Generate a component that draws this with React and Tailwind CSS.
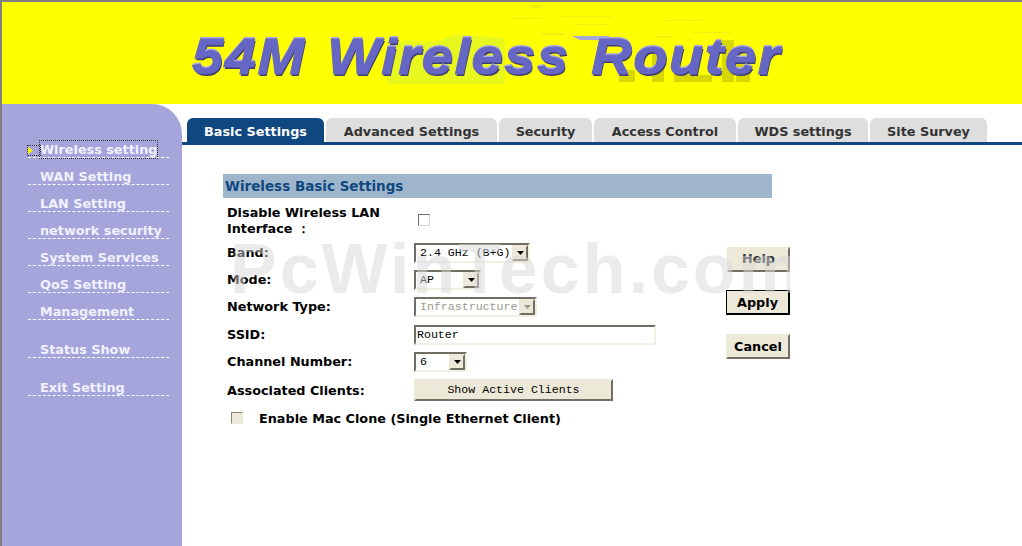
const menu = [
  { label: 'Wireless setting', active: true },
  { label: 'WAN Setting' },
  { label: 'LAN Setting' },
  { label: 'network security' },
  { label: 'System Services' },
  { label: 'QoS Setting' },
  { label: 'Management' },
  { label: 'Status Show', gap: true },
  { label: 'Exit Setting', gap: true },
];

const tabs = [
  { label: 'Basic Settings', width: 'w-[137px]', active: true },
  { label: 'Advanced Settings', width: 'w-[171px]' },
  { label: 'Security', width: 'w-[93px]' },
  { label: 'Access Control', width: 'w-[142px]' },
  { label: 'WDS settings', width: 'w-[130px]' },
  { label: 'Site Survey', width: 'w-[117px]' },
];

const sunken = 'border-2 border-t-[#716f64] border-l-[#716f64] border-r-[#f1efe2] border-b-[#f1efe2]';
const raised = 'border-2 border-t-[#ece9d8] border-l-[#ece9d8] border-r-[#716f64] border-b-[#716f64] bg-[#ece9d8]';
const mono = "font-['Liberation_Mono',monospace] text-[11.6px]";

function Select({ text, width, disabled }) {
  return (
    <div className={`${width} h-5 flex items-center justify-between ${sunken} ${mono} ${disabled ? 'text-[#9a9a8c]' : 'text-black'}`}>
      <span className="pl-1 leading-none">{text}</span>
      <span className={`w-4 h-4 flex items-center justify-center ${raised}`}>
        <svg width="7" height="4" viewBox="0 0 7 4">
          <path d="M0 0h7L3.5 4z" fill={disabled ? '#9a9a8c' : '#000'} />
        </svg>
      </span>
    </div>
  );
}

function Row({ label, height, children }) {
  return (
    <div className={`flex items-center ${height}`}>
      <div className="w-[191px] shrink-0 pl-1 text-[12.8px] font-bold leading-4 text-black">{label}</div>
      {children}
    </div>
  );
}

export default function App() {
  return (
    <div className="relative w-[1022px] h-[546px] overflow-hidden flex flex-col bg-white border-t-2 border-l-2 border-[#808080] font-['DejaVu_Sans',sans-serif]">
      {/* Banner */}
      <header className="relative h-[102px] shrink-0 bg-[#ffff00] pl-[190px] pt-[27px]">
        {/* compression blotches in the banner image */}
        <svg className="absolute left-0 top-0" width="1020" height="102" viewBox="0 0 1020 102">
          <path d="M385 44l18-6 30 2 20-8 50 4v46H385z" fill="#e8f81e" />
          <path d="M617 68h16v12h-16zM650 48h12v32h-12zM672 73h38v7h-38zM720 38h12v42h-12zM734 54h14v26h-14z" fill="#d8d800" />
          <path d="M527 3h14v3h-14zM510 16h30v1h-30zM560 14h50v1h-50zM540 31h22v2h-22zM575 22h30v1h-30zM660 18h40v1h-40zM655 34h14v2h-14zM690 30h40v1h-40z" fill="#f0f010" />
          <path d="M570 34h38l-6 4h-24z" fill="#a8a8d8" />
        </svg>
        <h1 className="relative origin-left scale-x-[1.12] font-['Liberation_Sans',sans-serif] text-[50px] leading-[56px] font-bold italic tracking-[1.4px] [word-spacing:4px] whitespace-nowrap text-[#6666c4] [-webkit-text-stroke:1px_#6666c4] [text-shadow:0_-2px_0_#a8a8e0,1px_2px_0_#3e3e70]">
          54M Wireless Router
        </h1>
      </header>

      <div className="flex flex-1 min-h-0">
        {/* Side menu */}
        <aside className="w-[180px] shrink-0 bg-[#a5a5dc] rounded-tr-[30px] pl-[26px] pr-[13px] pt-[27px]">
          {menu.map((item) => (
            <div
              key={item.label}
              className={`relative h-[27px] flex items-end border-b border-dashed border-white pl-3 ${item.gap ? 'mt-[11px]' : ''}`}
            >
              {item.active && (
                <span className="absolute left-0 bottom-[2px] w-3 h-[9px] flex items-center outline-1 outline-dotted outline-[#333]">
                  <svg width="5" height="7" viewBox="0 0 5 7">
                    <path d="M0 0l5 3.5L0 7z" fill="#ffff00" />
                  </svg>
                </span>
              )}
              <span className={`text-[12.8px] font-bold leading-[17px] mb-[-1px] whitespace-nowrap text-[#f1f1ff] ${item.active ? 'outline-1 outline-dotted outline-[#333]' : ''}`}>
                {item.label}
              </span>
            </div>
          ))}
        </aside>

        <main className="flex-1 min-w-0">
          {/* Tabs */}
          <nav className="mt-[14px] h-[27px] flex items-start gap-0.5 pl-[5px] border-b-[3px] border-[#0f4880]">
            {tabs.map((tab) => (
              <div
                key={tab.label}
                className={`${tab.width} rounded-t-md flex items-center justify-center pt-1 text-[12.8px] font-bold ${tab.active ? 'h-[27px] pb-[3px] bg-[#0f4880] text-white' : 'h-6 bg-[#dedede] text-[#333333]'}`}
              >
                {tab.label}
              </div>
            ))}
          </nav>

          <div className="pl-[41px] pt-[29px]">
            <h2 className="w-[549px] h-6 flex items-center pl-[2px] bg-[#9fb5cc] text-[13.5px] font-bold text-[#0f4880]">
              Wireless Basic Settings
            </h2>

            <div className="flex items-start">
              <div className="w-[503px] shrink-0 pt-1">
                <Row label={<>Disable Wireless LAN<br />Interface ：</>} height="h-[37px]">
                  <input type="checkbox" readOnly className="appearance-none w-3 h-3 ml-1 mb-0.5 border border-t-[#716f64] border-l-[#716f64] border-r-[#d8d5c5] border-b-[#d8d5c5] bg-white" />
                </Row>
                <Row label="Band:" height="h-[27px]">
                  <Select text="2.4 GHz (B+G)" width="w-[116px]" />
                </Row>
                <Row label="Mode:" height="h-[27px]">
                  <Select text="AP" width="w-[67px]" />
                </Row>
                <Row label="Network Type:" height="h-[28px]">
                  <Select text="Infrastructure" width="w-[123px]" disabled />
                </Row>
                <Row label="SSID:" height="h-[27px]">
                  <input
                    value="Router"
                    readOnly
                    className={`w-[242px] h-5 pl-px outline-none bg-white text-black ${sunken} ${mono}`}
                  />
                </Row>
                <Row label="Channel Number:" height="h-[28px]">
                  <Select text="6" width="w-[53px]" />
                </Row>
                <Row label="Associated Clients:" height="h-[29px]">
                  <button className={`w-[199px] h-[22px] mb-0.5 text-black ${raised} ${mono}`}>Show Active Clients</button>
                </Row>
                <div className="flex items-center h-[28px] pl-2">
                  <input type="checkbox" readOnly disabled className="appearance-none w-3 h-3 mb-0.5 border border-t-[#8a8878] border-l-[#8a8878] border-r-[#ece9d8] border-b-[#ece9d8] bg-[#ece9d8]" />
                  <span className="ml-4 text-[12.8px] font-bold text-black">Enable Mac Clone (Single Ethernet Client)</span>
                </div>
              </div>

              {/* Action buttons */}
              <div className="flex flex-col pt-[49px] w-16 text-[12.8px] font-bold">
                <button className={`h-[25px] ml-px pb-0.5 text-[#333] ${raised}`}>Help</button>
                <button className="h-[25px] mt-[18px] pt-px border border-b-2 border-r-2 border-black bg-[#ece9d8] text-black">Apply</button>
                <button className={`h-[25px] mt-[19px] text-black ${raised}`}>Cancel</button>
              </div>
            </div>
          </div>
        </main>
      </div>

      {/* Watermark stamped over the picture */}
      <div className="absolute left-[228px] top-[227px] w-[560px] overflow-hidden pointer-events-none font-['Liberation_Sans',sans-serif] font-bold text-[70px] tracking-[3px] leading-[80px] whitespace-nowrap text-[rgba(215,215,215,0.5)]">
        PcWinTech.com
      </div>
    </div>
  );
}
